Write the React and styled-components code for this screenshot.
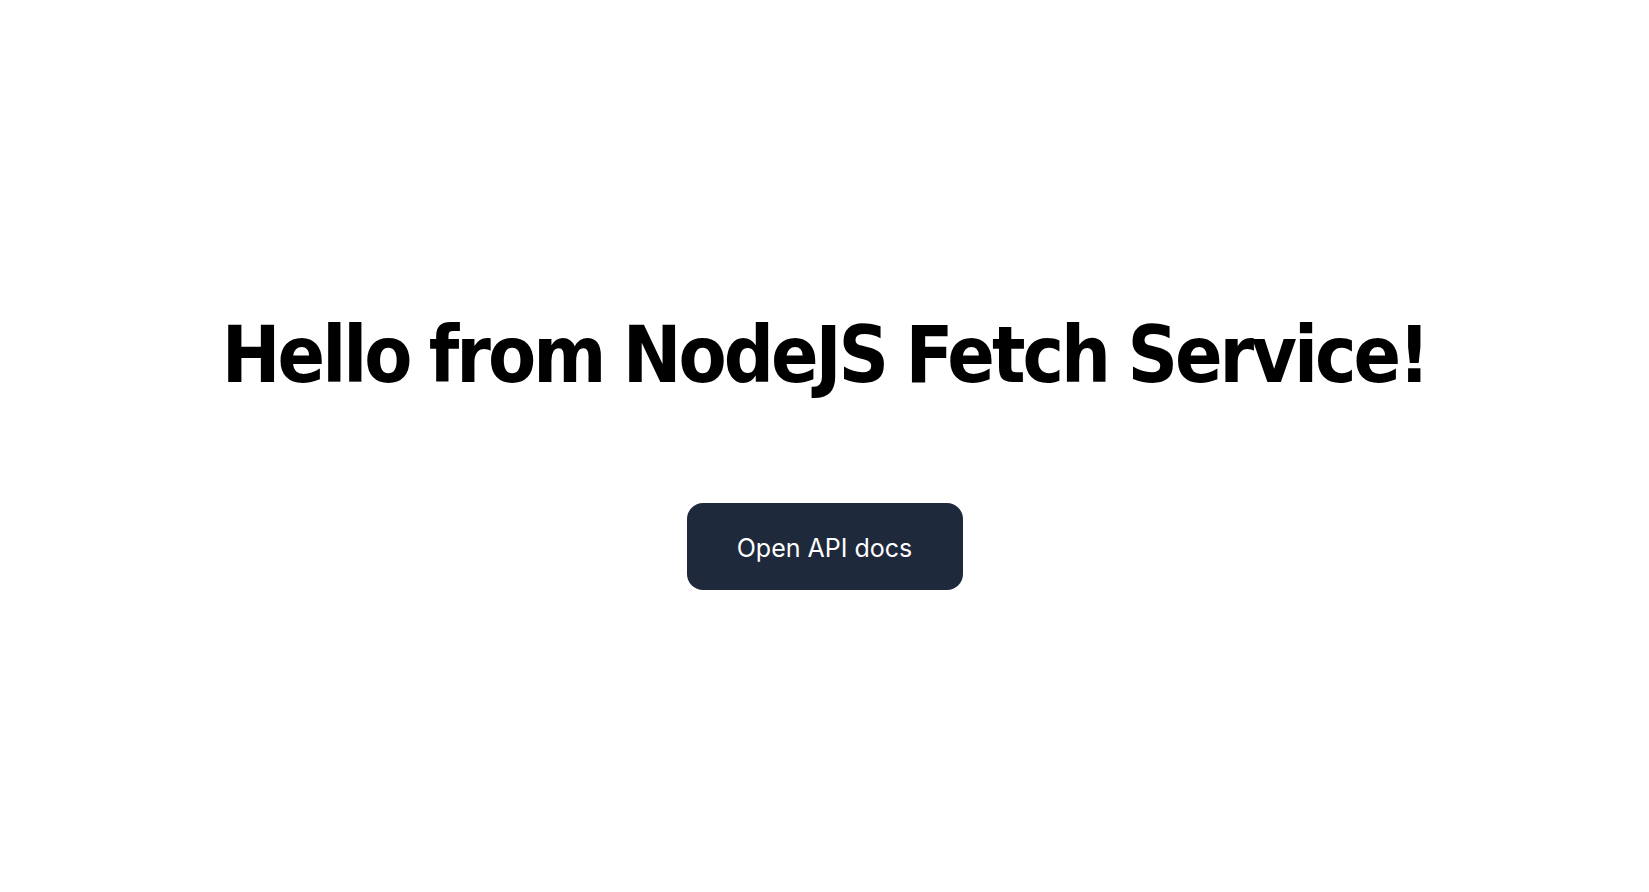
import React from "react";
import styled, { createGlobalStyle } from "styled-components";

const Global = createGlobalStyle`
  html, body { margin: 0; padding: 0; background: #ffffff; }
  body { font-family: Inter, "Noto Sans", sans-serif; }
`;

const Page = styled.main`
  min-height: 100vh;
  box-sizing: border-box;
  display: flex;
  flex-direction: column;
  align-items: center;
  padding-top: 316px;
`;

const Title = styled.h1`
  margin: 0;
  font-family: "DejaVu Sans Condensed", "DejaVu Sans", sans-serif;
  font-weight: 700;
  font-size: 78px;
  letter-spacing: -3px;
  word-spacing: -2px;
  line-height: 1;
  color: #000000;
  white-space: nowrap;
`;

const DocsButton = styled.a`
  margin-top: 109px;
  display: inline-flex;
  align-items: center;
  justify-content: center;
  box-sizing: border-box;
  width: 276px;
  height: 87px;
  padding-top: 3px;
  border-radius: 16px;
  background: #1e293b;
  color: #ffffff;
  font-family: Inter, sans-serif;
  font-size: 25px;
  text-decoration: none;
  cursor: pointer;
`;

export default function App() {
  return (
    <>
      <Global />
      <Page>
        <Title>Hello from NodeJS Fetch Service!</Title>
        <DocsButton href="#">Open API docs</DocsButton>
      </Page>
    </>
  );
}
